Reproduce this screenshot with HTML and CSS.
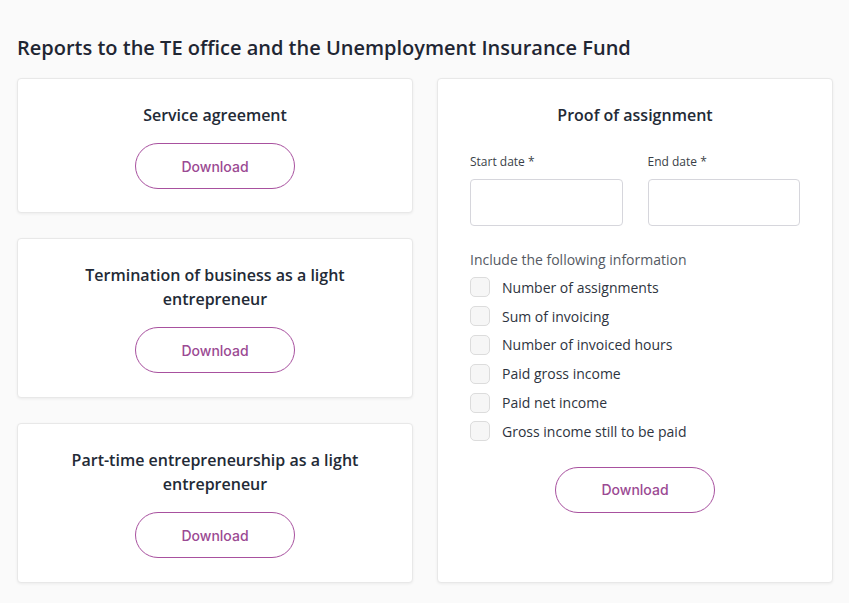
FILE: index.html
```html
<!DOCTYPE html>
<html lang="en">
<head>
  <meta charset="UTF-8">
  <title>Reports</title>
  <link rel="stylesheet" href="styles.css">
</head>
<body>
  <div class="page">
    <h2>Reports to the TE office and the Unemployment Insurance Fund</h2>
    <div class="grid">
      <div class="column">
        <div class="card short">
          <h3>Service agreement</h3>
          <button type="button">Download</button>
        </div>
        <div class="card">
          <h3>Termination of business as a light entrepreneur</h3>
          <button type="button">Download</button>
        </div>
        <div class="card">
          <h3>Part-time entrepreneurship as a light entrepreneur</h3>
          <button type="button">Download</button>
        </div>
      </div>

      <div class="card form-card">
        <h3>Proof of assignment</h3>
        <div class="dates">
          <div class="field">
            <label for="start">Start date *</label>
            <input type="text" id="start">
          </div>
          <div class="field">
            <label for="end">End date *</label>
            <input type="text" id="end">
          </div>
        </div>

        <p class="hint">Include the following information</p>
        <ul class="checks">
          <li><span class="box"></span>Number of assignments</li>
          <li><span class="box"></span>Sum of invoicing</li>
          <li><span class="box"></span>Number of invoiced hours</li>
          <li><span class="box"></span>Paid gross income</li>
          <li><span class="box"></span>Paid net income</li>
          <li><span class="box"></span>Gross income still to be paid</li>
        </ul>
        <button type="button">Download</button>
      </div>
    </div>
  </div>
</body>
</html>
```

FILE: styles.css
```css
body {
  margin: 0;
  font-family: "Open Sans", Arial, sans-serif;
  background: #fafafa;
  color: #232a36;
}

.page {
  padding: 34px 17px 20px 17px;
}

h2 {
  margin: 0 0 16px 0;
  font-size: 20px;
  font-weight: 600;
  line-height: 28px;
  color: #1f2633;
}

.grid {
  display: grid;
  grid-template-columns: 396px 396px;
  gap: 24px;
}

.column {
  display: flex;
  flex-direction: column;
  gap: 25px;
}

.card {
  background: #ffffff;
  border: 1px solid #e8e8e8;
  border-radius: 4px;
  box-shadow: 0 1px 3px rgba(0, 0, 0, 0.06);
  padding: 24px 40px 24px 40px;
  display: flex;
  flex-direction: column;
  align-items: center;
  box-sizing: border-box;
  height: 160px;
}

.card.short {
  height: 135px;
}

h3 {
  margin: 0 0 16px 0;
  font-size: 16px;
  font-weight: 600;
  line-height: 24px;
  text-align: center;
  color: #232a36;
}

button {
  width: 160px;
  height: 46px;
  border: 1px solid #a8519f;
  border-radius: 23px;
  background: #ffffff;
  color: #9b4a93;
  font-family: Inter, "Open Sans", sans-serif;
  font-size: 14px;
  font-weight: 500;
  cursor: pointer;
  flex-shrink: 0;
}

.form-card {
  height: auto;
  padding: 24px 32px;
  align-items: stretch;
}

.form-card h3 {
  margin-bottom: 27px;
}

.dates {
  display: grid;
  grid-template-columns: 1fr 1fr;
  gap: 25px;
}

.field label {
  display: block;
  font-size: 12px;
  line-height: 16px;
  color: #3a3f48;
  margin-bottom: 9px;
}

.field input {
  width: 100%;
  height: 47px;
  box-sizing: border-box;
  border: 1px solid #d6d6dc;
  border-radius: 4px;
  background: #ffffff;
}

.hint {
  margin: 24px 0 3px 0;
  font-size: 14px;
  line-height: 20px;
  color: #555a63;
}

.checks {
  list-style: none;
  margin: 0 0 21px 0;
  padding: 0;
}

.checks li {
  display: flex;
  align-items: center;
  height: 28.8px;
  font-size: 14px;
  color: #2e3440;
}

.box {
  width: 18px;
  height: 18px;
  border: 1px solid #dcdcdc;
  border-radius: 5px;
  background: #f6f6f6;
  margin-right: 12px;
}

.form-card button {
  align-self: center;
}
```
